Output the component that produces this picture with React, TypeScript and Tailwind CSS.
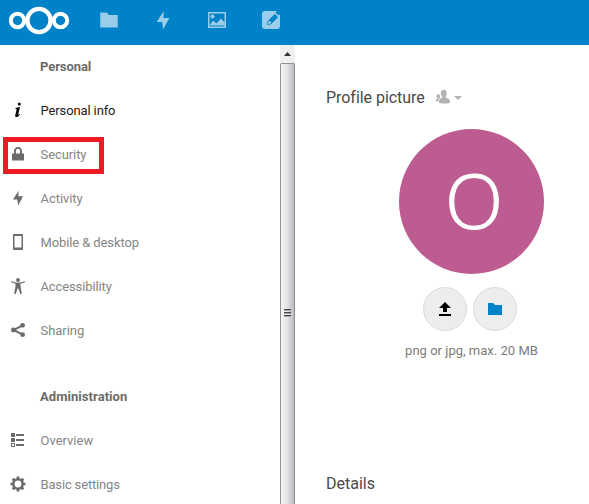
import type { ReactNode } from "react";

type Item = { label: string; icon: ReactNode; tracking: string; active?: boolean };

const FolderPath = "M1 2h5.2L8 4h7v10H1z";

function Bolt({ className }: { className: string }) {
  return (
    <svg className={className} viewBox="0 0 16 16" fill="currentColor">
      <path d="M8.600.7 3 9.600h4.200L8.200 15.300 13.100 6.300H8.300z" />
    </svg>
  );
}

const personal: Item[] = [
  {
    label: "Personal info",
    tracking: "tracking-[-0.12px]",
    active: true,
    icon: (
      <svg className="size-4" viewBox="0 0 16 16" fill="currentColor">
        <circle cx="9.300" cy="2.100" r="1.500" />
        <path d="M5.500 6 10 5 8.200 12.200c-.2.9.1 1 1.500-.4l.4.4C8.700 14.200 7.300 15.200 6.300 15.100c-1-.1-1.300-.9-1-2.100l1.300-5.500c.1-.6-.4-.8-1.400-.7z" />
      </svg>
    ),
  },
  {
    label: "Security",
    tracking: "tracking-[-0.08px]",
    icon: (
      <svg className="size-4" viewBox="0 0 16 16" fill="currentColor">
        <path d="M8 1C5.700 1 4 2.800 4 5v2.500H2V14.500h12V7.500h-2V5c0-2.200-1.700-4-4-4zm0 1.800c1.200 0 2.100 1 2.100 2.200v2.500H5.900V5c0-1.200.9-2.200 2.100-2.200z" />
      </svg>
    ),
  },
  { label: "Activity", tracking: "tracking-[-0.05px]", icon: <Bolt className="size-4" /> },
  {
    label: "Mobile & desktop",
    tracking: "tracking-[-0.11px]",
    icon: (
      <svg className="size-4" viewBox="0 0 16 16" fill="currentColor">
        <path fillRule="evenodd" d="M4 0h8q1 0 1 1v14q0 1-1 1H4q-1 0-1-1V1q0-1 1-1zm.5 2v11.500h7V2z" />
      </svg>
    ),
  },
  {
    label: "Accessibility",
    tracking: "tracking-[-0.12px]",
    icon: (
      <svg className="size-4" viewBox="0 0 16 16" fill="currentColor">
        <circle cx="8" cy="2" r="1.900" />
        <path d="m1.200 3.300 4.600 1.100h4.400l4.600-1.100.2 1-4.600 1.500.2 3.200 1.300 6.600-1.600.3L8.400 10.500h-.8l-1.900 5.400-1.600-.3L5.400 9l.2-3.200L1 4.300z" />
      </svg>
    ),
  },
  {
    label: "Sharing",
    tracking: "tracking-[-0.05px]",
    icon: (
      <svg className="size-4" viewBox="0 0 16 16" fill="currentColor">
        <path d="M12.700 3.300 3.500 8l9.200 4.700" fill="none" stroke="currentColor" strokeWidth="2" />
        <circle cx="12.600" cy="3.300" r="2.400" />
        <circle cx="3.400" cy="8" r="2.400" />
        <circle cx="12.600" cy="12.700" r="2.400" />
      </svg>
    ),
  },
];

const administration: Item[] = [
  {
    label: "Overview",
    tracking: "tracking-normal",
    icon: (
      <svg className="size-4" viewBox="0 0 16 16" fill="currentColor">
        <path d="M1 1h4v4H1zM1 6h4v4H1zM6 2h8v2H6zM6 7h8v2H6zM6 12h8v2H6z" />
        <path fillRule="evenodd" d="M1 11h4v4H1zm1 1v2h2v-2z" />
      </svg>
    ),
  },
  {
    label: "Basic settings",
    tracking: "tracking-[-0.16px]",
    icon: (
      <svg className="size-4" viewBox="0 0 16 16">
        <circle cx="8" cy="8" r="4.700" fill="none" stroke="currentColor" strokeWidth="2.600" />
        <path
          d="M8 .5v3M8 12.500v3M.5 8h3M12.500 8h3M2.700 2.700l2 2M11.300 11.300l2 2M2.700 13.300l2-2M11.300 4.700l2-2"
          stroke="currentColor"
          strokeWidth="2.700"
        />
      </svg>
    ),
  },
];

function NavItem({ item }: { item: Item }) {
  return (
    <li className={`relative flex h-11 shrink-0 items-center pl-[10px] ${item.active ? "text-black" : "text-[#6b6b6b]"}`}>
      <span className="flex size-4 items-center justify-center">{item.icon}</span>
      <span className={`ml-[14.500px] pt-[2px] whitespace-nowrap ${item.tracking} ${item.active ? "text-[#222]" : "text-[#858585]"}`}>
        {item.label}
      </span>
      {item.label === "Security" && (
        <span className="absolute top-[5px] left-[3px] h-[37px] w-[101px] border-[5px] border-[#ed1c24]" />
      )}
    </li>
  );
}

export default function App() {
  return (
    <div className="flex h-[504px] w-[589px] flex-col overflow-hidden bg-white font-['Roboto',sans-serif] text-[13px]">
      <header className="flex h-[45px] shrink-0 items-center bg-[#0082c9] pl-2 text-[#99cde9]">
        <svg className="mb-[5px] h-[30px] w-[63px]" viewBox="0 0 63 30" fill="none" stroke="white">
          <circle cx="9.500" cy="15.500" r="6.700" strokeWidth="4" />
          <circle cx="31" cy="15.500" r="11.600" strokeWidth="4.400" />
          <circle cx="52.500" cy="15.500" r="6.700" strokeWidth="4" />
        </svg>
        <nav className="mb-[5px] ml-[28px] flex items-center gap-[34px]">
          <svg className="size-5" viewBox="0 0 16 16" fill="currentColor">
            <path d={FolderPath} />
          </svg>
          <Bolt className="size-5" />
          <svg className="size-5" viewBox="0 0 20 20" fill="currentColor">
            <path fillRule="evenodd" d="M1 2h18v16H1zm1.500 1.500v13h15v-13z" />
            <circle cx="5.500" cy="6.500" r="2" />
            <path d="m2.500 15.500 3.700-5 3.200 3 4.600-5 4 4.500v2.500z" />
          </svg>
          <svg className="size-5" viewBox="0 0 20 20">
            <path d="M4 1h12l-1.500 1.500 3 3L19 4v12q0 3-3 3H4q-3 0-3-3V4q0-3 3-3z" fill="currentColor" />
            <path d="m6 15 .8-4 7-7 3.200 3.200-7 7z" fill="#0082c9" />
            <path d="m8.500 10.500 2 2-1.500 1.200-2 .4.400-2z" fill="currentColor" />
          </svg>
        </nav>
      </header>

      <div className="flex min-h-0 flex-1">
        <aside className="flex w-[280px] shrink-0 flex-col overflow-hidden">
          <h2 className="flex h-[43px] shrink-0 items-center pl-10 font-bold tracking-[-0.08px] text-[#6b6b6b]">Personal</h2>
          <ul className="flex flex-col">
            {personal.map((item) => <NavItem key={item.label} item={item} />)}
          </ul>
          <h2 className="mt-[22px] flex h-11 shrink-0 items-center pt-[2px] pl-10 font-bold tracking-[0.06px] text-[#6b6b6b]">Administration</h2>
          <ul className="flex flex-col">
            {administration.map((item) => <NavItem key={item.label} item={item} />)}
          </ul>
        </aside>

        <div className="flex w-[15px] shrink-0 flex-col bg-[#f0f0f0]">
          <div className="flex h-[18px] shrink-0 items-center justify-center">
            <svg className="h-1 w-[7px]" viewBox="0 0 7 4" fill="#333"><path d="M3.500 0 7 4H0z" /></svg>
          </div>
          <div className="flex flex-1 justify-center rounded-t-[2px] border-x border-t border-[#929292] bg-linear-to-r from-[#f6f6f6] via-[#e3e3e5] to-[#b9bac0] pt-[245px]">
            <div className="flex h-2 w-[7px] flex-col justify-between">
              <span className="h-[2px] border-b border-[#aaa] bg-[#444]" />
              <span className="h-[2px] border-b border-[#aaa] bg-[#444]" />
              <span className="h-[2px] border-b border-[#aaa] bg-[#444]" />
            </div>
          </div>
        </div>

        <main className="flex flex-1 flex-col pl-[31px]">
          <div className="mt-10 flex h-6 items-center">
            <h3 className="w-[99px] pt-[2px] whitespace-nowrap text-[16px] tracking-[-0.04px] text-[#4a4a4a]">Profile picture</h3>
            <svg className="ml-[10px] size-4" viewBox="0 0 16 16" fill="#b3b3b3">
              <path d="M8.800.8c1.900 0 3 1.300 3 3.200 0 1.600-.5 2.600-1.100 3.200v1.500c1.900.6 4.300 1.300 4.300 3V14q-5.500 1.200-11 0v-2.300c0-1.500 1.200-2.300 3-3V7.200C6.300 6.500 5.800 5.500 5.800 4c0-1.900 1.100-3.200 3-3.200z" />
              <path d="M3.300 5.200c1.300 0 2 .8 2 2 0 .7-.3 1.300-.8 1.700v.8L3.300 11v1.500H.8v-1c0-.9.600-1.300 1.500-1.600V9c-.6-.4-.9-1-.9-1.700 0-1.300.7-2.100 1.900-2.100z" />
            </svg>
            <svg className="mt-[2px] ml-[3px] h-1 w-2" viewBox="0 0 8 4" fill="#b3b3b3"><path d="M0 0h8L4 4z" /></svg>
          </div>
          <div className="mt-5 ml-[73px] flex w-[145px] flex-col items-center">
            <div className="flex size-[145px] items-center justify-center rounded-full bg-[#bc5c91] pb-[3px] pl-[5px] font-['Open_Sans',sans-serif] text-[76px] leading-none font-light text-white [-webkit-text-stroke:1px_white]">
              <span>O</span>
            </div>
            <div className="mt-[13px] mr-[3px] flex gap-[6px]">
              <button className="flex size-11 items-center justify-center rounded-full border border-[#dbdbdb] bg-[#ededed]">
                <svg className="size-4" viewBox="0 0 16 16"><path d="m8 1 6 6h-4v4H6V7H2zM2 13h12v2H2z" /></svg>
              </button>
              <button className="flex size-11 items-center justify-center rounded-full border border-[#dbdbdb] bg-[#ededed]">
                <svg className="size-4" viewBox="0 0 16 16" fill="#0082c9"><path d={FolderPath} /></svg>
              </button>
            </div>
            <p className="mt-[11px] whitespace-nowrap leading-[18px] tracking-[0.02px] text-[#7b7b7b]">png or jpg, max. 20 MB</p>
          </div>
          <h3 className="mt-[112px] text-[16px] leading-6 text-[#4a4a4a]">Details</h3>
        </main>
      </div>
    </div>
  );
}
